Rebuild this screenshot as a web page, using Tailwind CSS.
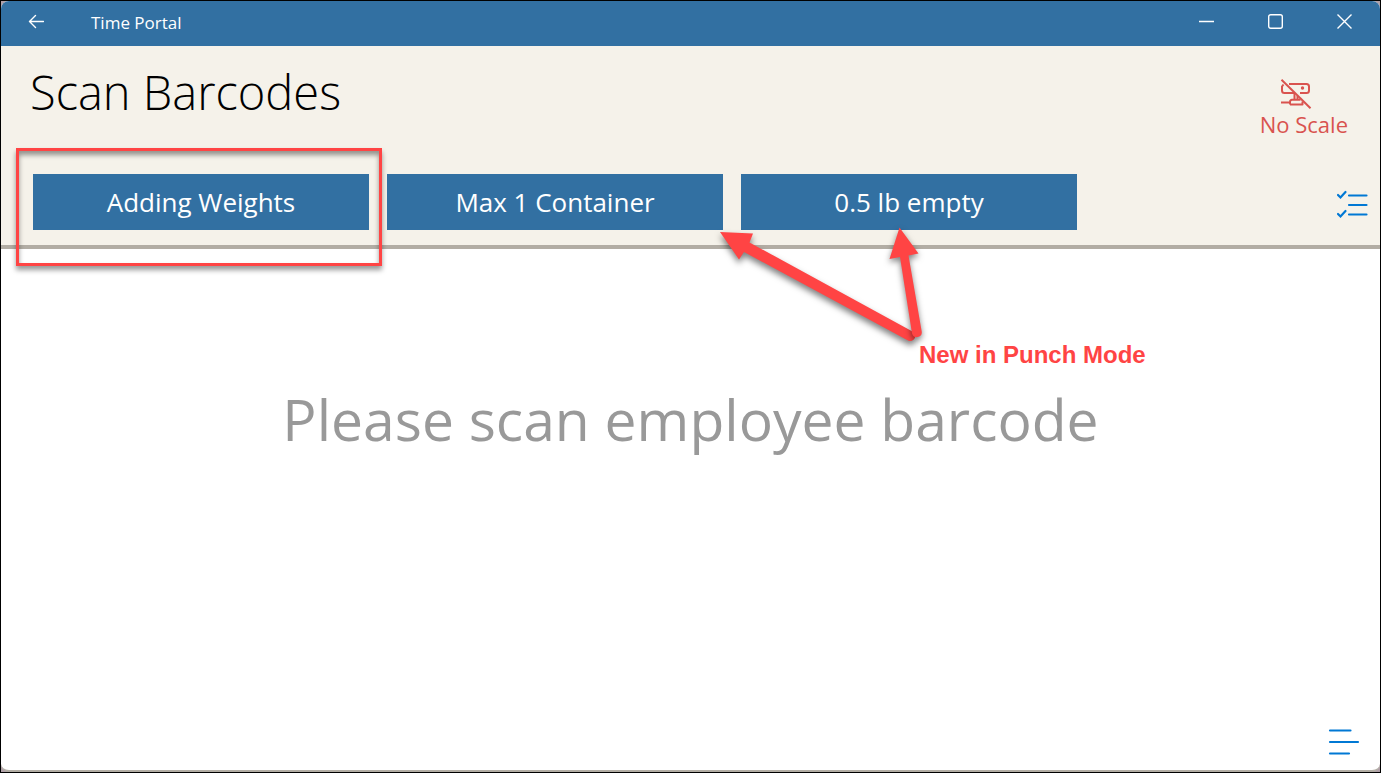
<!DOCTYPE html>
<html lang="en">
<head>
  <meta charset="UTF-8" />
  <meta name="viewport" content="width=device-width, initial-scale=1.0" />
  <title>Time Portal</title>
  <script src="https://cdn.jsdelivr.net/npm/@tailwindcss/browser@4"></script>
</head>
<body class="bg-[#b0a0a8] font-['Open_Sans','Noto_Sans',sans-serif]">
  <div class="relative flex min-h-screen flex-col border border-black">
    <div class="flex grow flex-col overflow-hidden rounded-lg border-b-2 border-[#b2ada4] bg-white">

      <!-- Title bar -->
      <div class="flex h-[45px] items-center bg-[#3270a2] text-white">
        <button type="button" aria-label="Back" class="ml-[27px] pb-1.5">
          <svg class="h-4 w-4" viewBox="0 0 16 16" fill="none" stroke="currentColor" stroke-width="1.4" stroke-linecap="round" stroke-linejoin="round">
            <path d="M15.500 8.500H1.500M7.500 2.500L1.500 8.500l6 6" />
          </svg>
        </button>
        <span class="ml-[47px] pb-0.5 text-[17px]">Time Portal</span>
        <div class="ml-auto flex gap-[53px] pr-[27px] pb-1.5">
          <button type="button" aria-label="Minimize">
            <svg class="h-4 w-4" viewBox="0 0 16 16" fill="none" stroke="currentColor" stroke-width="1.4">
              <path d="M0 8.500h15" />
            </svg>
          </button>
          <button type="button" aria-label="Maximize">
            <svg class="h-4 w-4" viewBox="0 0 16 16" fill="none" stroke="currentColor" stroke-width="1.4">
              <rect x="0.7" y="1.7" width="13.6" height="13.6" rx="2" />
            </svg>
          </button>
          <button type="button" aria-label="Close">
            <svg class="h-4 w-4" viewBox="0 0 16 16" fill="none" stroke="currentColor" stroke-width="1.4">
              <path d="M.5 1.500l14 14M14.500 1.500l-14 14" />
            </svg>
          </button>
        </div>
      </div>

      <!-- Header -->
      <header class="border-b-4 border-[#b2ada4] bg-[#f5f2ea] pb-[15px]">
        <div class="flex h-32 items-start justify-between pr-8 pl-[29px]">
          <h1 class="pt-3 text-[47px] leading-[68px] font-light text-black">Scan Barcodes</h1>
          <div class="flex flex-col items-center pt-8 text-[22px] leading-8 text-[#d9534f]">
            <svg class="mr-4 h-8 w-8" viewBox="0 0 32 32" fill="none" stroke="currentColor" stroke-width="2" stroke-linejoin="round">
              <path d="M9 6H26.500a2.500 2.500 0 0 1 2.500 2.500V12.500a2.500 2.500 0 0 1-2.500 2.500H20M14 15H4.500A2.500 2.500 0 0 1 2 12.500V8.500L3.500 6.500" />
              <path d="M1.500 1.800L30.500 30.300" />
              <path d="M14.500 15v6M17.500 18v3M1 24.400H9M10 26.500V24a2 2 0 0 1 2-2.200H20.500M10 26.500H22.500V23.500" />
              <circle cx="22.500" cy="10" r="1.700" fill="currentColor" stroke="none" />
            </svg>
            <span class="-mt-0.5">No Scale</span>
          </div>
        </div>
        <div class="flex items-center justify-between pr-3 pl-8">
          <div class="flex gap-[18px] text-[26px] text-white">
            <div class="relative">
              <button type="button" class="h-14 w-[336px] bg-[#3270a2]">Adding Weights</button>
              <!-- Highlight frame -->
              <div class="pointer-events-none absolute -top-[26px] -right-[13px] -bottom-9 -left-[17px] border-3 border-[#ff4444] shadow-[0_4px_5px_rgb(0_0_0/0.4),inset_0_4px_5px_rgb(0_0_0/0.4)]"></div>
            </div>
            <button type="button" class="h-14 w-[336px] bg-[#3270a2]">Max 1 Container</button>
            <button type="button" class="h-14 w-[336px] bg-[#3270a2]">0.5 lb empty</button>
          </div>
          <button type="button" aria-label="Task list" class="pt-1.5 text-[#0078d4]">
            <svg class="h-8 w-8" viewBox="0 0 32 32" fill="none" stroke="currentColor" stroke-width="2.2" stroke-linecap="round">
              <path d="M13 6.500H30.500M13 16H30.500M13 25.500H30.500" />
              <path d="M2 6L4.500 8.500L9.500 3M2 25L4.500 27.500L9.500 22" />
            </svg>
          </button>
        </div>
      </header>

      <!-- Prompt -->
      <main class="flex grow flex-col">
        <p class="pt-[130px] text-center text-[57px] leading-[80px] text-[#999999]">Please scan employee barcode</p>
        <button type="button" aria-label="Menu" class="mt-auto mr-5 mb-3 self-end text-[#0078d4]">
          <svg class="h-8 w-8" viewBox="0 0 32 32" fill="none" stroke="currentColor" stroke-width="2.2" stroke-linecap="round">
            <path d="M2 4.500H22.500M2 16H30M2 27.500H21" />
          </svg>
        </button>
      </main>
    </div>

    <!-- Callout -->
    <div class="pointer-events-none absolute top-[219px] left-[709px] text-[#ff4444]">
      <svg class="h-[130px] w-[230px] overflow-visible" viewBox="710 220 230 130" fill="currentColor" style="filter: drop-shadow(0 4px 3px rgb(0 0 0 / 0.5))">
        <path d="M720 232L753 233.500L749.500 242.500L912.500 331.500A5 5 0 0 1 908 340.500L744 252L739 259.500Z" />
      </svg>
      <svg class="absolute top-0 left-0 h-[130px] w-[230px] overflow-visible" viewBox="710 220 230 130" fill="currentColor" style="filter: drop-shadow(0 3px 3px rgb(0 0 0 / 0.5))">
        <path d="M899.500 227.500L918.500 253.500L908.500 255.500L921.800 332A5 5 0 0 1 912 333.500L900 257L889.500 259Z" />
      </svg>
      <p class="absolute top-[119px] left-[209px] font-['Liberation_Sans',Arial,sans-serif] text-2xl font-bold whitespace-nowrap">New in Punch Mode</p>
    </div>
  </div>
</body>
</html>
